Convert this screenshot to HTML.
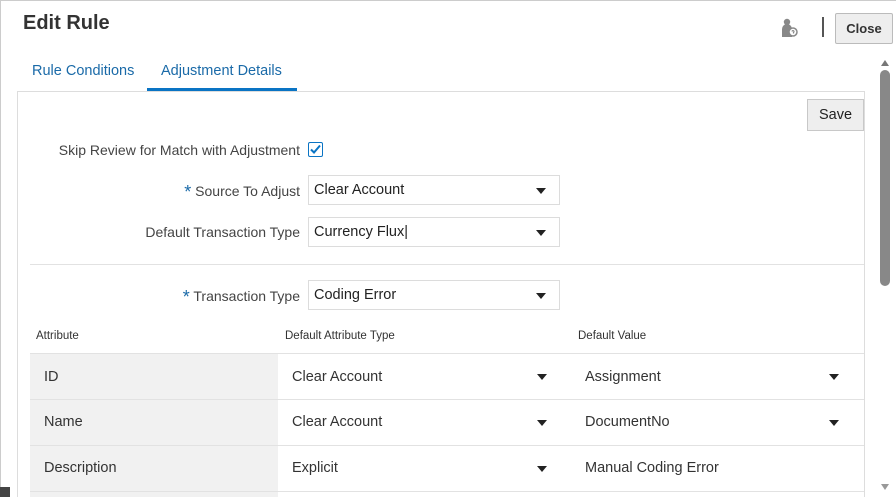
<!DOCTYPE html>
<html><head><style>
html,body{margin:0;width:896px;height:497px;overflow:hidden}
body{background:#fff;font-family:"Liberation Sans",sans-serif;color:#333;position:relative}
.a{position:absolute}
.sel{position:absolute;border:1px solid #dcdcdc;background:#fff;height:30px;box-sizing:border-box;font-size:14.5px;line-height:28px;padding-left:5px;color:#222}
.sel:after,.dd:after{content:"";position:absolute;right:13px;top:12px;border-left:5px solid transparent;border-right:5px solid transparent;border-top:6px solid #222}
.lbl{position:absolute;font-size:14px;color:#444;text-align:right}
.cell{position:absolute;font-size:14.5px;color:#333;line-height:46px}
.dd{position:absolute}
</style></head><body>
<div class="a" style="left:0;top:0;width:896px;height:1px;background:#ccc"></div>
<div class="a" style="left:0;top:0;width:1px;height:497px;background:#ccc"></div>
<div class="a" style="left:23px;top:12px;font-size:20px;font-weight:bold;color:#333">Edit Rule</div>
<svg class="a" style="left:781px;top:18px" width="18" height="20" viewBox="0 0 18 20"><circle cx="6" cy="4" r="3.2" fill="#888"/><path d="M1 19V11a5 5 0 0 1 10 0v8z" fill="#888"/><circle cx="12" cy="14" r="4" fill="#fff" stroke="#888" stroke-width="1.5"/><path d="M11 13.5a1 1 0 1 1 1.5 1v1" stroke="#888" stroke-width="1.2" fill="none"/></svg>
<div class="a" style="left:822px;top:17px;width:2px;height:20px;background:#555"></div>
<div class="a" style="left:835px;top:13px;width:58px;height:31px;box-sizing:border-box;border:1px solid #bbb;border-radius:2px;background:#eee;font-size:13px;font-weight:bold;text-align:center;line-height:29px">Close</div>
<div class="a" style="left:32px;top:63px;font-size:14.5px;color:#1a6aa8">Rule Conditions</div>
<div class="a" style="left:161px;top:63px;font-size:14.5px;color:#1a6aa8">Adjustment Details</div>
<div class="a" style="left:147px;top:88px;width:150px;height:3px;background:#0a74c4"></div>
<div class="a" style="left:17px;top:91px;width:848px;height:406px;box-sizing:border-box;border:1px solid #ddd;border-bottom:none"></div>
<div class="a" style="left:807px;top:99px;width:57px;height:32px;box-sizing:border-box;border:1px solid #c8c8c8;background:#eee;font-size:14.5px;text-align:center;line-height:30px;color:#222">Save</div>
<div class="lbl" style="left:30px;width:270px;top:142px">Skip Review for Match with Adjustment</div>
<div class="a" style="left:308px;top:142px;width:15px;height:15px;border:1px solid #0a74c4;box-sizing:border-box;border-radius:2px"><svg width="13" height="13" viewBox="0 0 13 13"><path d="M2 6.5l3 3 6-7" stroke="#0a74c4" stroke-width="2" fill="none"/></svg></div>
<div class="lbl" style="left:30px;width:270px;top:182px"><span style="color:#1a6aa8;font-size:18px;vertical-align:-2px">*</span> Source To Adjust</div>
<div class="sel" style="left:308px;top:175px;width:252px">Clear Account</div>
<div class="lbl" style="left:30px;width:270px;top:224px">Default Transaction Type</div>
<div class="sel" style="left:308px;top:217px;width:252px">Currency Flux|</div>
<div class="a" style="left:30px;top:264px;width:834px;height:1px;background:#e2e2e2"></div>
<div class="lbl" style="left:30px;width:270px;top:287px"><span style="color:#1a6aa8;font-size:18px;vertical-align:-2px">*</span> Transaction Type</div>
<div class="sel" style="left:308px;top:280px;width:252px">Coding Error</div>
<div class="a" style="left:36px;top:330px;font-size:11.5px;color:#333">Attribute</div>
<div class="a" style="left:285px;top:330px;font-size:11.5px;color:#333">Default Attribute Type</div>
<div class="a" style="left:578px;top:330px;font-size:11.5px;color:#333">Default Value</div>
<div class="a" style="left:30px;top:354px;width:248px;height:143px;background:#f1f1f1"></div>
<div class="a" style="left:30px;top:353px;width:834px;height:1px;background:#e2e2e2"></div>
<div class="a" style="left:30px;top:399px;width:834px;height:1px;background:#e2e2e2"></div>
<div class="a" style="left:30px;top:445px;width:834px;height:1px;background:#e2e2e2"></div>
<div class="a" style="left:30px;top:491px;width:834px;height:1px;background:#e2e2e2"></div>
<div class="cell" style="left:44px;top:354px">ID</div>
<div class="cell" style="left:292px;top:354px">Clear Account</div>
<div class="cell" style="left:585px;top:354px">Assignment</div>
<div class="cell" style="left:44px;top:399px">Name</div>
<div class="cell" style="left:292px;top:399px">Clear Account</div>
<div class="cell" style="left:585px;top:399px">DocumentNo</div>
<div class="cell" style="left:44px;top:445px">Description</div>
<div class="cell" style="left:292px;top:445px">Explicit</div>
<div class="cell" style="left:585px;top:445px">Manual Coding Error</div>
<div class="dd" style="left:530px;top:362px;width:30px;height:30px"></div>
<div class="dd" style="left:822px;top:362px;width:30px;height:30px"></div>
<div class="dd" style="left:530px;top:408px;width:30px;height:30px"></div>
<div class="dd" style="left:822px;top:408px;width:30px;height:30px"></div>
<div class="dd" style="left:530px;top:454px;width:30px;height:30px"></div>
<div class="a" style="left:881px;top:60px;border-left:4px solid transparent;border-right:4px solid transparent;border-bottom:6px solid #777"></div>
<div class="a" style="left:880px;top:70px;width:10px;height:216px;border-radius:5px;background:#888"></div>
<div class="a" style="left:881px;top:484px;border-left:4px solid transparent;border-right:4px solid transparent;border-top:6px solid #999"></div>
<div class="a" style="left:0;top:487px;width:10px;height:10px;background:#444"></div>
</body></html>
